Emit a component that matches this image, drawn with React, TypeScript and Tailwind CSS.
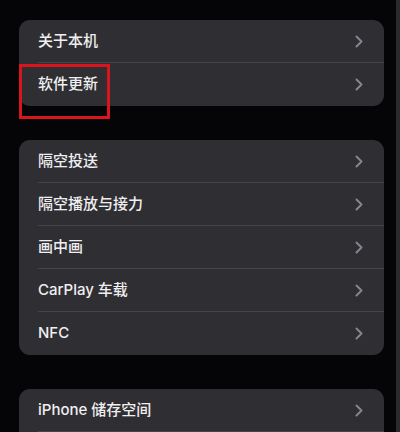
const FONT = { fontFamily: '"Inter", "Noto Sans CJK SC", sans-serif' };

function Chevron() {
  return (
    <svg width="8" height="13" viewBox="0 0 8 13" fill="none" className="shrink-0">
      <polyline
        points="1.5,1.5 6.5,6.5 1.5,11.5"
        stroke="#86858b"
        strokeWidth="2"
        strokeLinecap="round"
        strokeLinejoin="round"
      />
    </svg>
  );
}

function Row({ label, last }: { label: string; last?: boolean }) {
  return (
    <div className="flex h-[43px] pl-[19px]">
      <div
        className={
          "flex flex-1 items-center justify-between pr-[21px] " +
          (last ? "" : "border-b border-[#45444a]")
        }
      >
        <span className="text-[15px] font-medium text-[#efeff1]">{label}</span>
        <Chevron />
      </div>
    </div>
  );
}

function Card({ items, open }: { items: string[]; open?: boolean }) {
  return (
    <div className="ml-[19px] w-[365px] overflow-hidden rounded-[11px] bg-[#2f2e33]">
      {items.map((label, i) => (
        <Row key={label} label={label} last={!open && i === items.length - 1} />
      ))}
      {open ? <div className="h-[20px]" /> : null}
    </div>
  );
}

export default function App() {
  return (
    <div
      className="relative h-[432px] w-[400px] overflow-hidden bg-[#050407]"
      style={FONT}
    >
      <div className="flex flex-col gap-[34px] pt-5">
        <Card items={["关于本机", "软件更新"]} />
        <Card items={["隔空投送", "隔空播放与接力", "画中画", "CarPlay 车载", "NFC"]} />
        <Card items={["iPhone 储存空间"]} open />
      </div>
      {/* annotation box */}
      <div className="absolute left-[19px] top-[64px] h-[55px] w-[91px] border-[3px] border-[#d9141d]" />
      <div className="absolute right-0 top-0 h-full w-[4px] bg-[#2a2a2c]" />
    </div>
  );
}
